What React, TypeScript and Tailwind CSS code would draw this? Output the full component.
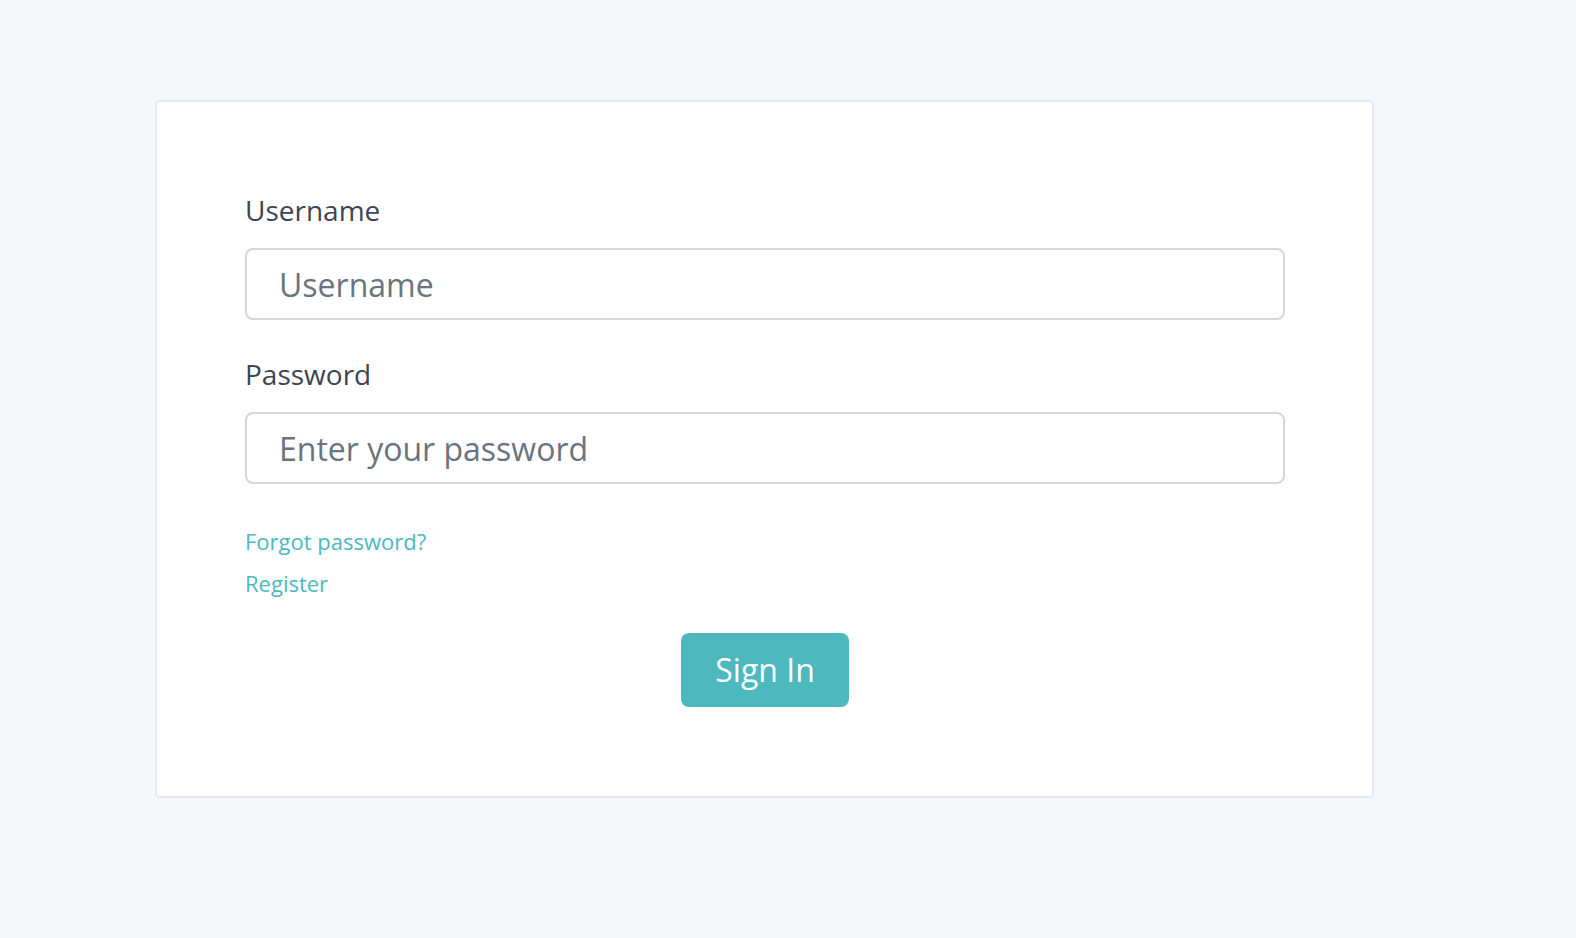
import React from "react";

export default function App() {
  return (
    <div
      className="min-h-screen w-full bg-[#f5f8fb] pt-[100px] pb-[142px]"
      style={{ fontFamily: '"Open Sans", "Noto Sans", sans-serif' }}
    >
      <div className="ml-[155px] w-[1219px] rounded-[5px] border-2 border-[#e5e8f1] bg-white pl-[88px] pr-[87px] pt-[87px] pb-[89px]">
        <form onSubmit={(e) => e.preventDefault()}>
          <div className="mb-[33px]">
            <label className="mb-[17px] block text-[28px] leading-[42px] text-[#3e4552]">
              Username
            </label>
            <input
              type="text"
              placeholder="Username"
              className="block h-[72px] w-full rounded-[8px] border-2 border-[#d3d7dd] bg-white px-[32px] text-[32px] text-[#3e4552] outline-none placeholder:text-[#6b7380]"
            />
          </div>
          <div>
            <label className="mb-[17px] block text-[28px] leading-[42px] text-[#3e4552]">
              Password
            </label>
            <input
              type="password"
              placeholder="Enter your password"
              className="block h-[72px] w-full rounded-[8px] border-2 border-[#d3d7dd] bg-white px-[32px] text-[32px] text-[#3e4552] outline-none placeholder:text-[#6b7380]"
            />
          </div>
          <div className="mt-[36px] flex flex-col items-start">
            <a href="#" className="text-[22px] leading-[42px] text-[#4cb9c0]">
              Forgot password?
            </a>
            <a href="#" className="text-[22px] leading-[42px] text-[#4cb9c0]">
              Register
            </a>
          </div>
          <div className="mt-[29px] flex justify-center">
            <button
              type="submit"
              className="h-[74px] w-[168px] rounded-[8px] bg-[#4db9bf] text-[32px] text-white"
            >
              Sign In
            </button>
          </div>
        </form>
      </div>
    </div>
  );
}
